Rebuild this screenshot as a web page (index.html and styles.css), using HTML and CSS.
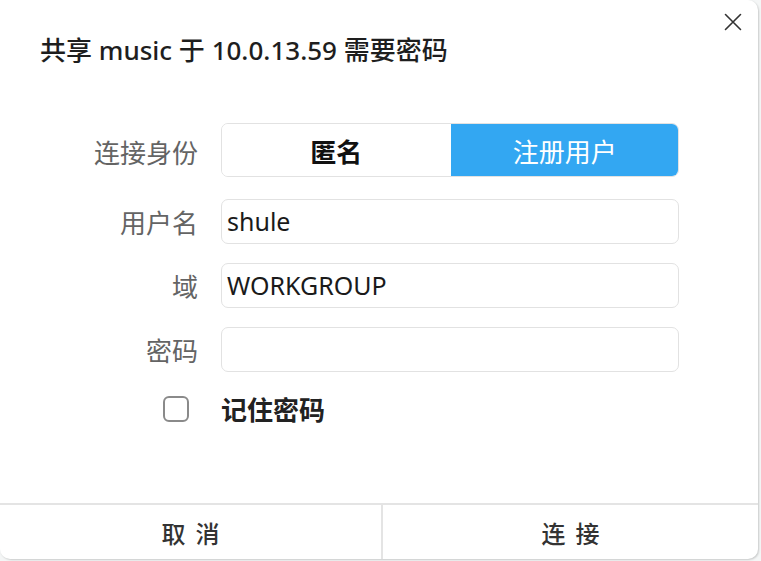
FILE: index.html
```html
<!DOCTYPE html>
<html lang="zh">
<head>
<meta charset="utf-8">
<title>需要密码</title>
<link rel="stylesheet" href="styles.css">
</head>
<body>
<div class="dialog">
  <div class="header">
    <h1 class="title">共享 music 于 10.0.13.59 需要密码</h1>
    <button class="close" aria-label="关闭">
      <svg width="18" height="18" viewBox="0 0 18 18"><path d="M1.5 1.5 L16.5 16.5 M16.5 1.5 L1.5 16.5" stroke="#333" stroke-width="1.6" fill="none" stroke-linecap="round"/></svg>
    </button>
  </div>
  <div class="form">
    <div class="label">连接身份</div>
    <div class="segment">
      <div class="seg seg-off">匿名</div>
      <div class="seg seg-on">注册用户</div>
    </div>
    <div class="label">用户名</div>
    <div class="input">shule</div>
    <div class="label">域</div>
    <div class="input">WORKGROUP</div>
    <div class="label">密码</div>
    <div class="input"></div>
    <div class="check-cell"><span class="checkbox"></span></div>
    <div class="check-label">记住密码</div>
  </div>
  <div class="footer">
    <button class="btn">取消</button>
    <button class="btn btn-right">连接</button>
  </div>
</div>
</body>
</html>
```
FILE: styles.css
```css
* { box-sizing: border-box; }
html, body { margin: 0; padding: 0; background: #f4f6f6; }
body {
  width: 761px;
  height: 561px;
  font-family: "Noto Sans", "Noto Sans CJK SC", sans-serif;
  overflow: hidden;
}
.dialog {
  width: 758px;
  height: 559px;
  background: #fff;
  border-radius: 0 10px 10px 10px;
  box-shadow: 1px 1px 2px rgba(0,0,0,0.18);
  display: flex;
  flex-direction: column;
  position: relative;
}
.header {
  padding: 32px 0 0 40px;
}
.title {
  margin: 0;
  font-family: "Noto Sans", "Noto Sans CJK SC", sans-serif;
  font-size: 26px;
  font-weight: 500;
  line-height: 36px;
  color: #1e1e1e;
}
.close {
  position: absolute;
  top: 13px;
  right: 16px;
  width: 18px;
  height: 18px;
  padding: 0;
  border: 0;
  background: none;
}
.close svg { display: block; }
.form {
  margin-top: 55px;
  display: grid;
  grid-template-columns: 198px 458px;
  column-gap: 23px;
  row-gap: 19px;
  align-items: center;
}
.label {
  text-align: right;
  font-family: "Noto Sans CJK SC", sans-serif;
  font-size: 26px;
  color: #646464;
  line-height: 32px;
}
.segment {
  height: 54px;
  display: flex;
  border-radius: 7px;
  overflow: hidden;
  border: 1px solid #e2e2e2;
  margin-bottom: 3px;
}
.seg {
  flex: 1;
  display: flex;
  align-items: center;
  justify-content: center;
  font-family: "Noto Sans CJK SC", sans-serif;
  font-size: 26px;
}
.seg-off { color: #111; font-weight: 700; background: #fff; }
.seg-on { color: #fff; background: #33a7f2; margin: -1px -1px -1px 0; }
.input {
  height: 45px;
  border: 1px solid #e2e2e2;
  border-radius: 7px;
  padding: 0 5px;
  font-size: 25px;
  color: #1a1a1a;
  line-height: 43px;
}
.check-cell {
  display: flex;
  justify-content: flex-end;
  padding-right: 9px;
  margin-top: 2px;
}
.checkbox {
  width: 26px;
  height: 26px;
  border: 2px solid #8a8a8a;
  border-radius: 6px;
  display: block;
}
.check-label {
  margin-top: 2px;
  font-family: "Noto Sans CJK SC", sans-serif;
  font-size: 26px;
  font-weight: 700;
  color: #222;
  line-height: 32px;
}
.footer {
  margin-top: auto;
  height: 56px;
  border-top: 2px solid #e4e4e4;
  display: flex;
}
.btn {
  flex: 0 0 381px;
  border: 0;
  background: none;
  font-family: "Noto Sans CJK SC", sans-serif;
  font-size: 24px;
  font-weight: 500;
  letter-spacing: 10px;
  text-indent: 10px;
  color: #333;
  padding: 0;
}
.btn-right {
  flex: 1;
  border-left: 2px solid #e4e4e4;
}
```
